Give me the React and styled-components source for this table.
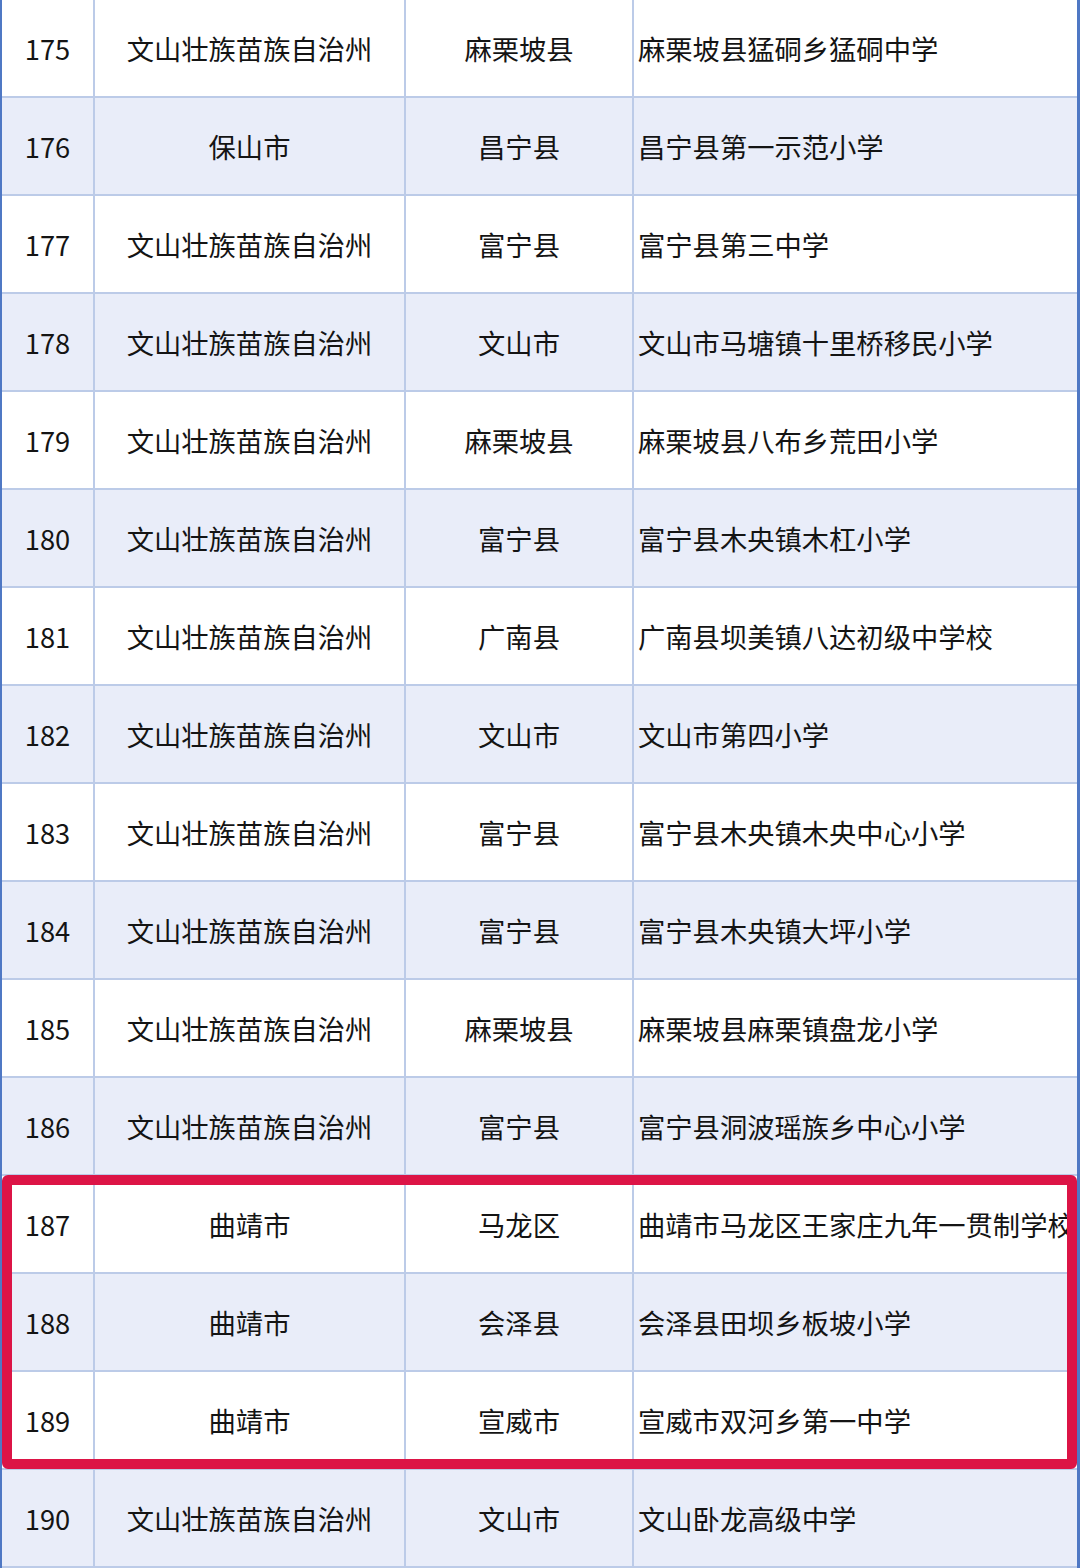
import React from "react";
import styled, { createGlobalStyle } from "styled-components";

const Global = createGlobalStyle`
  html, body { margin: 0; padding: 0; background: #fff; }
  body { font-family: "Noto Sans CJK SC", "Noto Sans", sans-serif; }
`;

const Table = styled.div`
  width: 1080px;
  box-sizing: border-box;
  border-left: 2px solid #4f78c4;
  border-right: 3px solid #4f78c4;
  display: flex;
  flex-direction: column;
`;

const Row = styled.div`
  display: grid;
  grid-template-columns: 93px 311px 228px 1fr;
  height: 98px;
  box-sizing: border-box;
  border-bottom: 2px solid #bccbe8;
  background: ${(p) => (p.$alt ? "#e9edf9" : "#ffffff")};
`;

const Cell = styled.div`
  display: flex;
  align-items: center;
  justify-content: ${(p) => (p.$left ? "flex-start" : "center")};
  padding-left: ${(p) => (p.$left ? "4px" : "0")};
  border-right: ${(p) => (p.$last ? "none" : "2px solid #bccbe8")};
  font-size: 27.3px;
  color: #141414;
  white-space: nowrap;
  overflow: hidden;
  padding-bottom: 1px;
  box-sizing: border-box;
`;

const Group = styled.div`
  position: relative;
  display: flex;
  flex-direction: column;
`;

const Highlight = styled.div`
  position: absolute;
  top: -1px;
  left: 0px;
  right: 0px;
  bottom: 1px;
  border: 10px solid #dc1446;
  border-radius: 6px;
  pointer-events: none;
`;

const rows = [
  ["175", "文山壮族苗族自治州", "麻栗坡县", "麻栗坡县猛硐乡猛硐中学"],
  ["176", "保山市", "昌宁县", "昌宁县第一示范小学"],
  ["177", "文山壮族苗族自治州", "富宁县", "富宁县第三中学"],
  ["178", "文山壮族苗族自治州", "文山市", "文山市马塘镇十里桥移民小学"],
  ["179", "文山壮族苗族自治州", "麻栗坡县", "麻栗坡县八布乡荒田小学"],
  ["180", "文山壮族苗族自治州", "富宁县", "富宁县木央镇木杠小学"],
  ["181", "文山壮族苗族自治州", "广南县", "广南县坝美镇八达初级中学校"],
  ["182", "文山壮族苗族自治州", "文山市", "文山市第四小学"],
  ["183", "文山壮族苗族自治州", "富宁县", "富宁县木央镇木央中心小学"],
  ["184", "文山壮族苗族自治州", "富宁县", "富宁县木央镇大坪小学"],
  ["185", "文山壮族苗族自治州", "麻栗坡县", "麻栗坡县麻栗镇盘龙小学"],
  ["186", "文山壮族苗族自治州", "富宁县", "富宁县洞波瑶族乡中心小学"],
  ["187", "曲靖市", "马龙区", "曲靖市马龙区王家庄九年一贯制学校"],
  ["188", "曲靖市", "会泽县", "会泽县田坝乡板坡小学"],
  ["189", "曲靖市", "宣威市", "宣威市双河乡第一中学"],
  ["190", "文山壮族苗族自治州", "文山市", "文山卧龙高级中学"],
];

const renderRow = (r, i) => (
  <Row key={r[0]} $alt={i % 2 === 1}>
    <Cell>{r[0]}</Cell>
    <Cell>{r[1]}</Cell>
    <Cell>{r[2]}</Cell>
    <Cell $left $last>{r[3]}</Cell>
  </Row>
);

export default function App() {
  return (
    <>
      <Global />
      <Table>
        {rows.slice(0, 12).map((r, i) => renderRow(r, i))}
        <Group>
          {rows.slice(12, 15).map((r, i) => renderRow(r, i + 12))}
          <Highlight />
        </Group>
        {rows.slice(15).map((r, i) => renderRow(r, i + 15))}
      </Table>
    </>
  );
}
